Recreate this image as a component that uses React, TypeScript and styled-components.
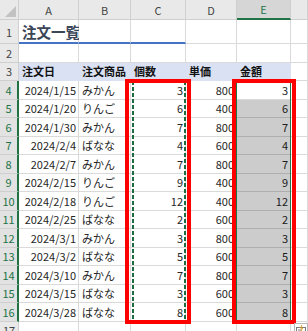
import React from "react";
import styled, { createGlobalStyle } from "styled-components";

type Order = {
  date: string;
  item: string;
  qty: number;
  price: number;
};

const orders: Order[] = [
  { date: "2024/1/15", item: "みかん", qty: 3, price: 800 },
  { date: "2024/1/20", item: "りんご", qty: 6, price: 400 },
  { date: "2024/1/30", item: "みかん", qty: 7, price: 800 },
  { date: "2024/2/4", item: "ばなな", qty: 4, price: 600 },
  { date: "2024/2/7", item: "みかん", qty: 7, price: 800 },
  { date: "2024/2/15", item: "りんご", qty: 9, price: 400 },
  { date: "2024/2/18", item: "りんご", qty: 12, price: 400 },
  { date: "2024/2/25", item: "ばなな", qty: 2, price: 600 },
  { date: "2024/3/1", item: "みかん", qty: 3, price: 800 },
  { date: "2024/3/2", item: "ばなな", qty: 5, price: 600 },
  { date: "2024/3/10", item: "みかん", qty: 7, price: 800 },
  { date: "2024/3/15", item: "ばなな", qty: 3, price: 600 },
  { date: "2024/3/28", item: "ばなな", qty: 8, price: 600 },
];

// F is only a sliver at the right edge, its letter is out of view
const columns = ["A", "B", "C", "D", "E", ""];
const headings = ["注文日", "注文商品", "個数", "単価", "金額"];

// rowhead, A..F
const COLS = "19px 60px 52px 55px 51px 54px 1fr";
// column header, row 1 (heading), rows 2..17
const ROWS = "20px 24px repeat(16, 18.5px)";

const GRID = "#DADADA";
const HEAD_LINE = "#CFCFCF";
const EXCEL_GREEN = "#217346";
const ANTS = "#1d6b3e";

const GlobalStyle = createGlobalStyle`
  *, *::before, *::after { box-sizing: border-box; }
  html, body {
    margin: 0;
    padding: 0;
    background: #fff;
  }
  body {
    width: 308px;
    height: 331px;
    overflow: hidden;
    font-family: "Noto Sans CJK JP", "Noto Sans", sans-serif;
  }
`;

const Stack = styled.div`
  display: grid;
  width: 308px;
  height: 331px;
  overflow: hidden;

  & > * {
    grid-area: 1 / 1;
  }
`;

const Sheet = styled.div`
  display: grid;
  grid-template-columns: ${COLS};
  grid-template-rows: ${ROWS};
  font-size: 11px;
  color: #262626;
`;

const Layer = styled.div`
  display: grid;
  grid-template-columns: ${COLS};
  grid-template-rows: ${ROWS};
  pointer-events: none;
`;

const Corner = styled.div`
  background: #e9e9e9;
  border-right: 1px solid ${HEAD_LINE};
  border-bottom: 1px solid ${HEAD_LINE};
  display: flex;
  align-items: flex-end;
  justify-content: flex-end;
  padding: 0 2px 2px 0;
`;

const ColHead = styled.div<{ $active?: boolean }>`
  display: flex;
  align-items: center;
  justify-content: center;
  background: ${({ $active }) => ($active ? "#d6d6d6" : "#e9e9e9")};
  color: ${({ $active }) => ($active ? EXCEL_GREEN : "#444")};
  border-right: 1px solid ${HEAD_LINE};
  border-bottom: ${({ $active }) =>
    $active ? `2px solid ${EXCEL_GREEN}` : `1px solid ${HEAD_LINE}`};
  font-size: 11px;
`;

const RowHead = styled.div<{ $active?: boolean }>`
  display: flex;
  align-items: center;
  justify-content: center;
  background: ${({ $active }) => ($active ? "#e2e2e2" : "#e9e9e9")};
  color: ${({ $active }) => ($active ? EXCEL_GREEN : "#444")};
  border-right: ${({ $active }) =>
    $active ? `2px solid ${EXCEL_GREEN}` : `1px solid ${HEAD_LINE}`};
  border-bottom: 1px solid ${HEAD_LINE};
  font-size: 11px;
`;

const Cell = styled.div<{ $right?: boolean; $fill?: string }>`
  display: flex;
  align-items: center;
  justify-content: ${({ $right }) => ($right ? "flex-end" : "flex-start")};
  padding: 0 ${({ $right }) => ($right ? "2px" : "3px")} 0 3px;
  min-width: 0;
  white-space: nowrap;
  overflow: hidden;
  background: ${({ $fill }) => $fill ?? "#fff"};
  border-right: 1px solid ${({ $fill }) => $fill ?? GRID};
  border-bottom: 1px solid ${({ $fill }) => $fill ?? GRID};
`;

const HeadingCell = styled(Cell)<{ $ruled?: boolean }>`
  overflow: visible;
  font-size: 14.5px;
  font-weight: 700;
  color: #3b4658;
  border-bottom: ${({ $ruled }) =>
    $ruled ? "2px solid #4472c4" : `1px solid ${GRID}`};
`;

const LabelCell = styled(Cell)`
  font-weight: 700;
  color: #111;
`;

const Shade = styled.div`
  grid-column: 6;
  grid-row: 6 / 18;
  background: rgba(0, 0, 0, 0.2);
`;

const SelectionFrame = styled.div`
  grid-column: 6;
  grid-row: 5 / 18;
  border: 1.5px solid ${EXCEL_GREEN};
  margin: -1px 0 0 -1px;
`;

// dashed "copied" border that Excel runs around a copy range
const Marquee = styled.div`
  grid-column: 4;
  grid-row: 5 / 18;
  margin: 0 0 0 1px;
  background:
    repeating-linear-gradient(to bottom, ${ANTS} 0 4px, transparent 4px 6px) left / 2px 100% no-repeat,
    repeating-linear-gradient(to bottom, ${ANTS} 0 4px, transparent 4px 6px) right / 2px 100% no-repeat,
    repeating-linear-gradient(to right, ${ANTS} 0 4px, transparent 4px 6px) top / 100% 2px no-repeat,
    repeating-linear-gradient(to right, ${ANTS} 0 4px, transparent 4px 6px) bottom / 100% 2px no-repeat;
`;

const Callout = styled.div<{ $col: number }>`
  grid-column: ${({ $col }) => $col};
  grid-row: 5 / 18;
  border: 4px solid #ff0000;
  margin: -2px -5px -2px ${({ $col }) => ($col === 4 ? "-6px" : "-5px")};
`;

const QuickButton = styled.div`
  grid-column: 7;
  grid-row: 18;
  justify-self: start;
  align-self: start;
  width: 14px;
  height: 14px;
  margin: 1px 0 0 3px;
  background: #fff;
  border: 1px solid #b8b8b8;
  display: flex;
  align-items: center;
  justify-content: center;
`;

const CornerMark = () => (
  <svg width="11" height="11" viewBox="0 0 11 11">
    <polygon points="11,0 11,11 0,11" fill="#c2c2c2" />
  </svg>
);

const QuickIcon = () => (
  <svg width="10" height="10" viewBox="0 0 10 10">
    <rect x="0.5" y="2.5" width="9" height="7" fill="none" stroke="#7a7a7a" />
    <path d="M2 5h3M2 7h5" stroke="#7a7a7a" strokeWidth="1" />
    <path d="M6 0l-1.5 3h2L5 6" fill="none" stroke="#d89a1e" strokeWidth="1" />
  </svg>
);

const App: React.FC = () => {
  const emptyRow = (n: number) => (
    <React.Fragment key={`r${n}`}>
      <RowHead>{n}</RowHead>
      {columns.map((c, i) => (
        <Cell key={i} />
      ))}
    </React.Fragment>
  );

  return (
    <>
      <GlobalStyle />
      <Stack>
        <Sheet>
          <Corner>
            <CornerMark />
          </Corner>
          {columns.map((c, i) => (
            <ColHead key={i} $active={c === "E"}>
              {c}
            </ColHead>
          ))}

          <RowHead>1</RowHead>
          <HeadingCell $ruled>注文一覧</HeadingCell>
          <HeadingCell $ruled />
          <HeadingCell $ruled />
          <Cell />
          <Cell />
          <Cell />

          {emptyRow(2)}

          <RowHead>3</RowHead>
          {headings.map((h) => (
            <LabelCell key={h} $fill="#d9e1f2">
              {h}
            </LabelCell>
          ))}
          <Cell />

          {orders.map((o, i) => (
            <React.Fragment key={o.date}>
              <RowHead $active>{i + 4}</RowHead>
              <Cell $right>{o.date}</Cell>
              <Cell>{o.item}</Cell>
              <Cell $right>{o.qty}</Cell>
              <Cell $right>{o.price}</Cell>
              <Cell $right>{o.qty}</Cell>
              <Cell />
            </React.Fragment>
          ))}

          {emptyRow(17)}
        </Sheet>

        <Layer>
          <Shade />
          <SelectionFrame />
          <Marquee />
          <Callout $col={4} />
          <Callout $col={6} />
          <QuickButton>
            <QuickIcon />
          </QuickButton>
        </Layer>
      </Stack>
    </>
  );
};

export default App;
